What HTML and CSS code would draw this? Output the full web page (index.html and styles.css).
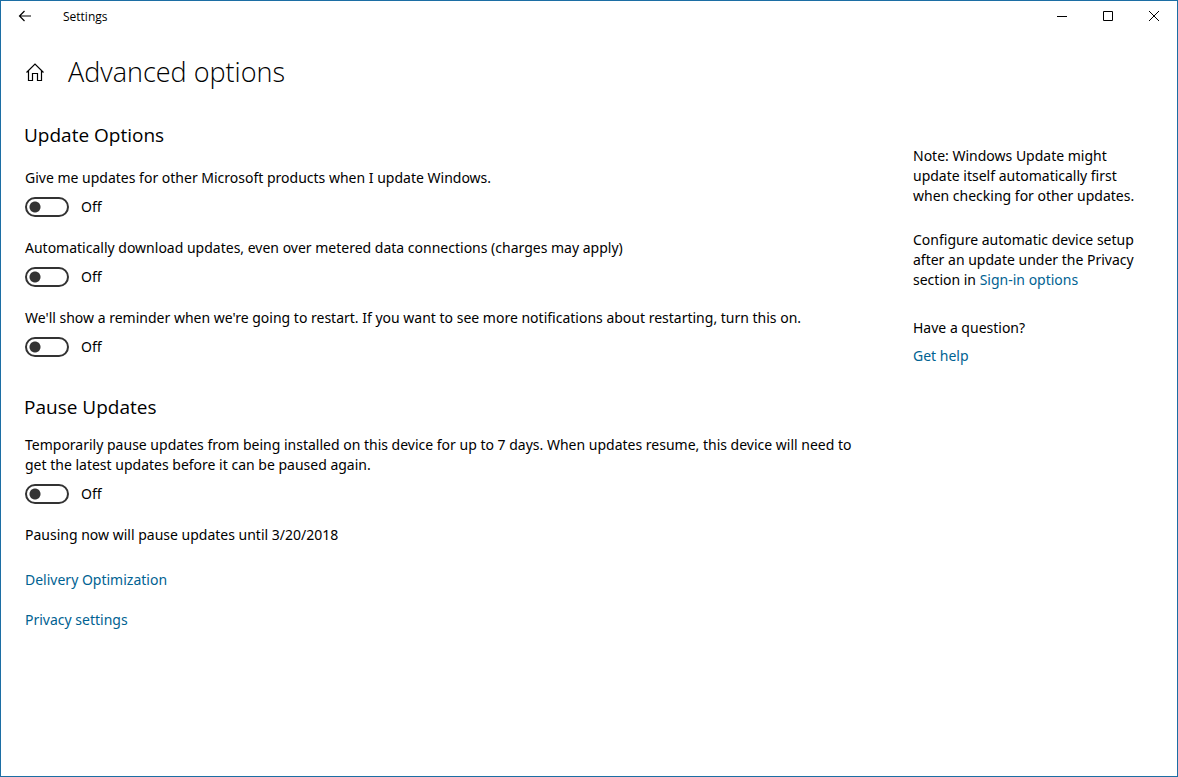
FILE: index.html
```html
<!DOCTYPE html>
<html lang="en">
<head>
<meta charset="utf-8">
<title>Settings</title>
<link rel="stylesheet" href="styles.css">
</head>
<body>
<div class="window">
  <header class="titlebar">
    <button class="back" type="button" aria-label="Back">
      <svg width="14" height="12" viewBox="0 0 14 12"><path d="M13 6H1.500M6.500 1L1.500 6l5 5"/></svg>
    </button>
    <span class="app-name">Settings</span>
    <div class="window-controls">
      <button type="button" aria-label="Minimize"><svg width="12" height="12" viewBox="0 0 12 12"><path d="M1 6.500h10"/></svg></button>
      <button type="button" aria-label="Maximize"><svg width="12" height="12" viewBox="0 0 12 12"><path d="M1.500 1.500h9v9h-9z"/></svg></button>
      <button type="button" aria-label="Close"><svg width="12" height="12" viewBox="0 0 12 12"><path d="M1 1l10 10M11 1L1 11"/></svg></button>
    </div>
  </header>

  <div class="page-head">
    <button class="home" type="button" aria-label="Home">
      <svg width="20" height="20" viewBox="0 0 20 20"><path d="M1.500 10.500L10 2l8.500 8.500M3.500 9v9.500h4v-7h5v7h4V9"/></svg>
    </button>
    <h1>Advanced options</h1>
  </div>

  <div class="content">
    <main>
      <section class="group">
        <h2>Update Options</h2>
        <div class="setting">
          <label for="other-products">Give me updates for other Microsoft products when I update Windows.</label>
          <div class="switch-row"><input class="switch" type="checkbox" role="switch" id="other-products"><span>Off</span></div>
        </div>
        <div class="setting">
          <label for="metered">Automatically download updates, even over metered data connections (charges may apply)</label>
          <div class="switch-row"><input class="switch" type="checkbox" role="switch" id="metered"><span>Off</span></div>
        </div>
        <div class="setting">
          <label for="reminder">We'll show a reminder when we're going to restart. If you want to see more notifications about restarting, turn this on.</label>
          <div class="switch-row"><input class="switch" type="checkbox" role="switch" id="reminder"><span>Off</span></div>
        </div>
      </section>
      <section class="group">
        <h2>Pause Updates</h2>
        <div class="setting">
          <label for="pause">Temporarily pause updates from being installed on this device for up to 7 days. When updates resume, this device will need to get the latest updates before it can be paused again.</label>
          <div class="switch-row"><input class="switch" type="checkbox" role="switch" id="pause"><span>Off</span></div>
        </div>
        <p>Pausing now will pause updates until 3/20/2018</p>
      </section>
      <nav class="links">
        <a href="#delivery">Delivery Optimization</a>
        <a href="#privacy">Privacy settings</a>
      </nav>
    </main>
    <aside>
      <p>Note: Windows Update might update itself automatically first when checking for other updates.</p>
      <p>Configure automatic device setup after an update under the Privacy section in <a href="#sign-in">Sign-in options</a></p>
      <div class="help">
        <p>Have a question?</p>
        <a href="#help">Get help</a>
      </div>
    </aside>
  </div>
</div>
</body>
</html>
```
FILE: styles.css
```css
* { box-sizing: border-box; }

body {
  margin: 0;
  background: #fff;
  color: #000;
  font: 14px/20px "Noto Sans", "Open Sans", sans-serif;
}

h1, h2, p { margin: 0; font-weight: 400; }

h1, h2, .app-name { font-family: "Open Sans", "Noto Sans", sans-serif; }

a { color: #006292; text-decoration: none; }

button {
  display: flex;
  align-items: center;
  justify-content: center;
  padding: 0;
  border: 0;
  background: none;
}

svg { fill: none; stroke: #000; stroke-width: 1; }

.window {
  min-height: 100vh;
  border: 1px solid #1c6ea4;
}

.titlebar {
  display: flex;
  align-items: center;
  height: 30px;
}

.back { width: 48px; height: 30px; }
.back svg { stroke-width: 1.2; }

.app-name {
  padding: 2px 0 0 14px;
  font-size: 12px;
}

.window-controls { display: flex; margin-left: auto; }
.window-controls button { width: 46px; height: 30px; }

.page-head {
  display: flex;
  align-items: center;
  gap: 23px;
  padding: 21px 24px 0;
}

.home { width: 20px; height: 20px; }
.home svg { stroke-width: 1.2; }

h1 {
  font-size: 27px;
  line-height: 40px;
  font-weight: 300;
}

.content {
  display: grid;
  grid-template-columns: minmax(0, 1fr) 228px;
  gap: 44px;
  padding: 29px 36px 24px 24px;
}

.group { margin-bottom: 36px; }

h2 {
  margin: 0 0 19px -1px;
  font-size: 19px;
  line-height: 28px;
}

.group + .group h2 { margin-bottom: 14px; }

.setting { margin-bottom: 21px; }
.setting label { display: block; margin-bottom: 9px; }

.switch-row {
  display: flex;
  align-items: center;
  gap: 12px;
}

.switch {
  appearance: none;
  width: 44px;
  height: 20px;
  margin: 0;
  border: 2px solid #333;
  border-radius: 10px;
  background: radial-gradient(circle at 8px 8px, #333 5px, transparent 6px);
}

.switch:checked { background: radial-gradient(circle at 32px 8px, #333 5px, transparent 6px); }

.links {
  display: flex;
  flex-direction: column;
  align-items: flex-start;
  gap: 20px;
}

.group:last-of-type { margin-bottom: 25px; }

aside {
  display: flex;
  flex-direction: column;
  gap: 24px;
  padding-top: 25px;
}

.help {
  display: flex;
  flex-direction: column;
  align-items: flex-start;
  gap: 8px;
  padding-top: 4px;
}
```
